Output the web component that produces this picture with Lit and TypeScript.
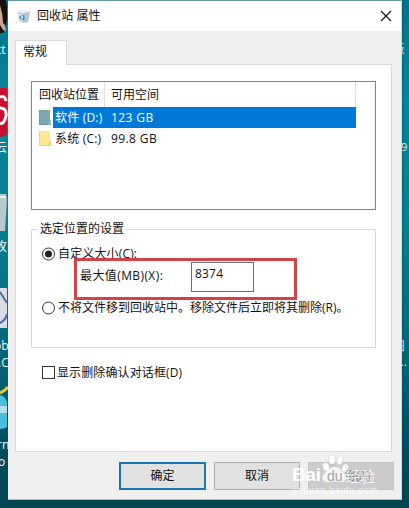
import { LitElement, html, svg, css } from "lit";
import { customElement, property } from "lit/decorators.js";

const textFont = css`"Open Sans", "Noto Sans CJK SC", sans-serif`;

@customElement("desk-left")
class DeskLeft extends LitElement {
  static styles = css`
    :host { display: block; width: 8px; height: 508px; overflow: hidden; }
    svg { display: block; }
    text { font-family: ${textFont}; fill: #f4f8f8; font-size: 12px; }
  `;
  render() {
    return html`<svg width="8" height="508" viewBox="0 0 8 508">
      <path d="M0 0H6L7 6V20L5 29L3 33H0Z" fill="#15100f" />
      <path d="M0 5Q3 14 3 23L5 25L6 31L3 30L0 25Z" fill="#cda58c" />
      <text x="-3" y="54">tt</text>
      <path d="M0 88H7V134Q4 137 0 137Z" fill="#c8102c" />
      <path d="M0 97Q5 95 6 101M0 108Q7 108 6 116Q4 125 0 123" fill="none" stroke="#fff" stroke-width="3" />
      <text x="-5" y="152">云</text>
      <path d="M0 194H6L7 200L5 231H0Z" fill="#b9c8cb" />
      <path d="M0 197H6" stroke="#e5eeee" stroke-width="2" />
      <text x="-5" y="251">攻</text>
      <path d="M0 288H7V328H0Z" fill="#d8dde5" />
      <path d="M0 292L7 303M0 323Q6 320 7 314" fill="none" stroke="#4d6aa3" stroke-width="2" />
      <text x="-6" y="350">ob</text>
      <text x="-2" y="367">.C</text>
      <path d="M0 395Q5 396 7 402V406H0ZM0 413H7V427Q4 429 0 429Z" fill="#49bfe0" />
      <path d="M0 406H7V413H0Z" fill="#b5dfee" />
      <path d="M0 393Q5 391 8 387" stroke="#e8c72e" stroke-width="3" fill="none" />
      <text x="-3" y="449">rn</text>
      <text x="-2" y="466">o</text>
    </svg>`;
  }
}

@customElement("desk-right")
class DeskRight extends LitElement {
  static styles = css`
    :host { display: block; width: 7px; height: 508px; overflow: hidden; }
    svg { display: block; }
    text { font-family: ${textFont}; fill: #e8eeee; font-size: 11px; }
  `;
  render() {
    return html`<svg width="7" height="508" viewBox="0 0 7 508">
      <path d="M0 0H1.5V508H0Z" fill="#044650" opacity=".35" />
      <text x="-8.5" y="53">板</text>
      <text x="-1" y="151">9</text>
      <text x="-8.5" y="350">图</text>
      <text x="-1" y="366">..</text>
    </svg>`;
  }
}

@customElement("drive-row")
class DriveRow extends LitElement {
  @property() name = "";
  @property() space = "";
  @property({ type: Boolean, reflect: true }) selected = false;
  static styles = css`
    :host { display: flex; align-items: center; height: 21px; width: 324px; padding-left: 7px; box-sizing: border-box; }
    svg { flex: none; width: 14px; height: 17px; }
    .cells { display: flex; align-items: center; flex: 1; height: 21px; padding-left: 2px; }
    .name { width: 56px; letter-spacing: .2px; }
    .space { letter-spacing: .4px; }
    :host([selected]) .cells { background: #0078d7; color: #fff; }
  `;
  render() {
    const back = this.selected ? "#78a9b0" : "#ffe78f";
    const fold = this.selected ? "#93bbbc" : "#f6cf62";
    return html`<svg viewBox="0 0 14 17">
        <path d="M0 1H11V11L12 12V16H0Z" fill=${back} />
        <path d="M11 10L12 12V16H9Z" fill=${fold} />
        <path d="M.5 1V15.5H12" fill="none" stroke=${this.selected ? "#5e94a0" : "#e9cd6a"} stroke-width=".6" />
      </svg>
      <div class="cells"><span class="name">${this.name}</span><span class="space">${this.space}</span></div>`;
  }
}

@customElement("app-root")
class AppRoot extends LitElement {
  static styles = css`
    :host {
      display: grid; grid-template-columns: 8px 394px 7px; width: 409px; height: 508px; overflow: hidden;
      font: 12px/16px ${textFont}; color: #111; white-space: nowrap;
      background: linear-gradient(#08738a 0, #04859a 20%, #087e91 45%, #056577 70%, #034b5b 90%, #034452);
    }
    * { box-sizing: border-box; }
    .dialog { height: 500px; border-top: 1px solid #609da6; border-right: 1px solid #b9e8ea; border-bottom: 1px solid #9bcdd1; background: #efefef; }
    .title { height: 30px; background: #fff; display: flex; align-items: center; padding: 0 9px 0 10px; }
    .title span { margin-left: 7px; flex: 1; letter-spacing: .1px; }
    .tab { position: relative; width: 52px; height: 25px; margin: 9px 0 -1px 7px; padding: 3px 0 0 7px; background: #fff; border: 1px solid #d9d9d9; border-bottom: 0; }
    .panel { width: 377px; height: 388px; margin-left: 7px; padding: 16px 15px 0; background: #fff; border: 1px solid #d9d9d9; }
    .list { width: 345px; height: 129px; border: 1px solid #80858b; }
    .head { display: flex; width: 324px; height: 25px; border-right: 1px solid #ddd; }
    .head span { padding: 5px 0 0 6px; }
    .head .first { width: 73px; padding-left: 7px; border-right: 1px solid #e0e0e0; }
    .group { width: 345px; height: 119px; margin-top: 19px; border: 1px solid #d9d9d9; }
    .legend { width: 88px; height: 16px; margin: -9px 0 0 6px; padding-left: 2px; background: #fff; }
    .option { display: flex; align-items: center; height: 16px; padding-left: 10px; }
    .option svg { margin-right: 2px; flex: none; }
    .size { margin-top: 9px; letter-spacing: .15px; }
    .limit { position: relative; display: flex; width: 223px; height: 42px; margin: -4px 0 0 42px; border: 3px solid #d24348; }
    .limit span { width: 114px; padding: 7px 0 0 3px; letter-spacing: .4px; }
    .limit .value { width: 63px; height: 30px; margin-top: 1px; padding: 3px 0 0 3px; border: 1px solid #707070; letter-spacing: .2px; }
    .confirm { margin-top: 17px; letter-spacing: .12px; }
    .buttons { display: flex; gap: 8px; margin: 10px 0 0 111px; }
    .btn { width: 86px; height: 28px; display: flex; align-items: center; justify-content: center; background: #e1e1e1; border: 1px solid #adadad; }
    .main { border: 2px solid #1b75b5; width: 87px; }
    .off { background: #cbcbcb; border-color: #c3c3c3; color: #868686; }
    .mark { position: absolute; left: 288px; top: 450px; }
    .mark text { font-family: "Liberation Sans", "Noto Sans CJK SC", sans-serif; fill: #fff; }
    .mark .du { fill: #a2a2a2; }
  `;
  radio(on: boolean) {
    return html`<svg width="14" height="14" viewBox="0 0 14 14">
      <circle cx="6.5" cy="7" r="6" fill="#fff" stroke="#333" />
      ${on ? svg`<circle cx="6.5" cy="7" r="3.5" fill="#222"/>` : ""}
    </svg>`;
  }
  render() {
    return html`
      <desk-left></desk-left>
      <div class="dialog">
        <div class="title">
          <svg width="12" height="15" viewBox="0 0 12 15">
            <path d="M0 3L4 1L12 2L10 13L4 14L1 12Z" fill="#cedbe4" />
            <path d="M5 4L12 2L10 13L5 14Z" fill="#b4c6d3" />
            <path d="M1 2L5 0L8 2L11 1L12 3L4 4Z" fill="#edf2f5" />
            <circle cx="4" cy="8.5" r="2" fill="none" stroke="#2b86c6" stroke-width="1.2" stroke-dasharray="3 1.2" />
          </svg>
          <span>回收站 属性</span>
          <svg width="12" height="12" viewBox="0 0 12 12"><path d="M1 1L11 11M11 1L1 11" stroke="#111" stroke-width="1.1" /></svg>
        </div>
        <div class="tab">常规</div>
        <div class="panel">
          <div class="list">
            <div class="head"><span class="first">回收站位置</span><span>可用空间</span></div>
            <drive-row selected name="软件 (D:)" space="123 GB"></drive-row>
            <drive-row name="系统 (C:)" space="99.8 GB"></drive-row>
          </div>
          <div class="group">
            <div class="legend">选定位置的设置</div>
            <div class="option size">${this.radio(true)}自定义大小(C):</div>
            <div class="limit"><span>最大值(MB)(X):</span><div class="value">8374</div></div>
            <div class="option">${this.radio(false)}不将文件移到回收站中。移除文件后立即将其删除(R)。</div>
          </div>
          <div class="option confirm">
            <svg width="14" height="14" viewBox="0 0 14 14"><rect x="1.5" y=".5" width="12" height="12" fill="#fff" stroke="#333" /></svg>显示删除确认对话框(D)
          </div>
        </div>
        <div class="buttons">
          <div class="btn main">确定</div><div class="btn">取消</div><div class="btn off">应用(A)</div>
        </div>
      </div>
      <desk-right></desk-right>
      <svg class="mark" width="106" height="46" viewBox="0 0 106 46">
        <g fill="#fff">
          <ellipse cx="38" cy="17" rx="3" ry="4.3" transform="rotate(-20 38 17)" stroke="#ddd" stroke-width=".5" />
          <ellipse cx="44" cy="9.5" rx="3.2" ry="4.6" stroke="#ccc" stroke-width=".5" />
          <ellipse cx="52" cy="10" rx="3" ry="4.6" transform="rotate(12 52 10)" stroke="#ccc" stroke-width=".5" />
          <ellipse cx="57" cy="18" rx="2.8" ry="4.2" transform="rotate(20 57 18)" stroke="#ddd" stroke-width=".5" />
          <path d="M47 17C52 17 52 20 56 23C60 27 58 33 53 32Q47 31 42 32C35 34 32 27 37 23C41 20 42 17 47 17Z" opacity=".85" />
          <text x="4" y="31" font-size="19" font-weight="bold" textLength="29" lengthAdjust="spacingAndGlyphs">Bai</text>
          <text x="57" y="32" font-size="15" textLength="30" opacity=".75">经验</text>
        </g>
        <text class="du" x="39" y="31" font-size="14">du</text>
        <text x="4" y="43" font-size="9" textLength="85" opacity=".7">jingyan.baidu.com</text>
      </svg>`;
  }
}
